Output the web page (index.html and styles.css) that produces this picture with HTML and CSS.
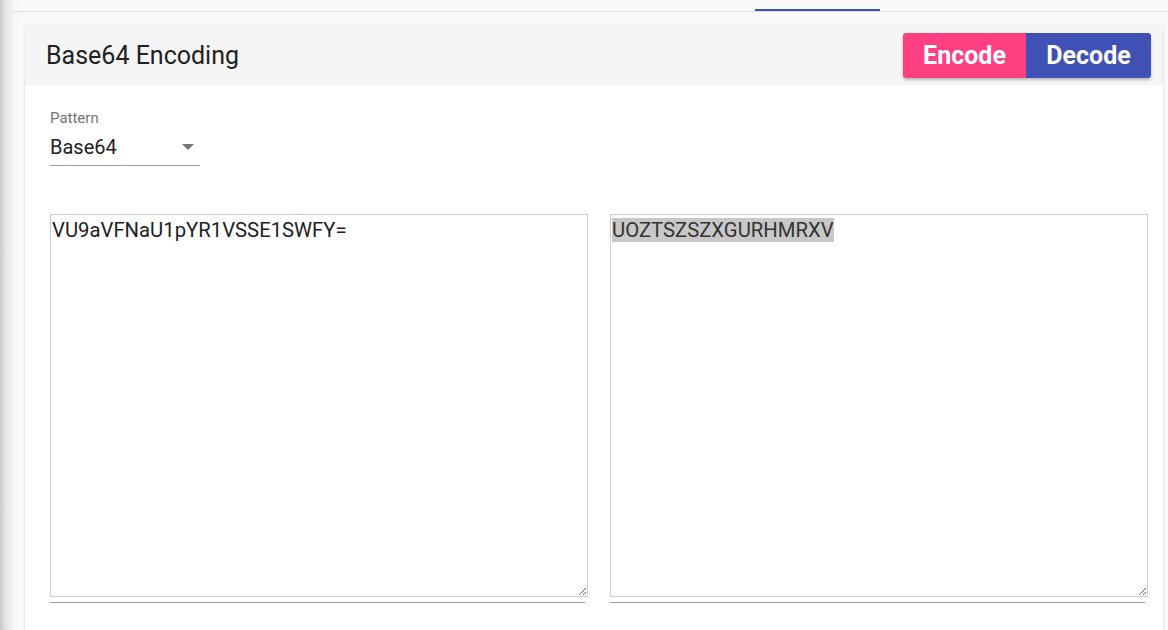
FILE: index.html
```html
<!DOCTYPE html>
<html>
<head>
    <title>Base64 Encoding</title>
    <link rel="stylesheet" href="styles.css">
</head>
<body>
    <div id="main">
        <div id="tab-bar">
            <div class="tab-ink"></div>
        </div>
        <div id="card">
            <div class="card-header">
                <h2>Base64 Encoding</h2>
                <div class="btn-group">
                    <button type="button" class="btn btn-encode">Encode</button>
                    <button type="button" class="btn btn-decode">Decode</button>
                </div>
            </div>
            <div class="card-body">
                <div class="field">
                    <label>Pattern</label>
                    <div class="select">
                        <span>Base64</span>
                        <span class="caret"></span>
                    </div>
                </div>
                <div class="io-row">
                    <div class="io-box">
                        <textarea id="input">VU9aVFNaU1pYR1VSSE1SWFY=</textarea>
                        <div class="underline"></div>
                    </div>
                    <div class="io-box">
                        <div class="output"><span class="selected">UOZTSZSZXGURHMRXV</span></div>
                        <div class="underline"></div>
                    </div>
                </div>
            </div>
        </div>
    </div>
</body>
</html>
```

FILE: styles.css
```css
body {
    font-family: Roboto, "Noto Sans", Arial, sans-serif;
    background: linear-gradient(to right, #c9c9c9 0, #e6e6e6 6px, #f5f5f5 14px, #fafafa 20px);
    margin: 0;
    padding: 0;
    height: 630px;
    overflow: hidden;
}

#main {
    margin-left: 13px;
}

#tab-bar {
    height: 11px;
    border-bottom: 1px solid #dcdcdc;
    display: flex;
    align-items: flex-end;
}

.tab-ink {
    margin-left: 742px;
    width: 125px;
    height: 2px;
    background-color: #3f51b5;
}

#card {
    margin: 13px 5px 0 12px;
    background-color: #fff;
    box-shadow: 0 1px 3px rgba(0, 0, 0, 0.15);
    height: 620px;
}

.card-header {
    height: 60px;
    background-color: #f5f5f5;
    display: flex;
    align-items: center;
    justify-content: space-between;
    padding: 0 12px 0 21px;
}

.card-header h2 {
    margin: 0;
    font-size: 25px;
    font-weight: 400;
    color: #212121;
}

.btn-group {
    display: flex;
    border-radius: 3px;
    overflow: hidden;
    box-shadow: 0 2px 3px rgba(0, 0, 0, 0.25);
}

.btn {
    height: 45px;
    border: none;
    color: #fff;
    font-family: Roboto, Arial, sans-serif;
    font-size: 25px;
    font-weight: 700;
    padding: 0;
    cursor: pointer;
}

.btn-encode {
    background-color: #ff4081;
    width: 123px;
}

.btn-decode {
    background-color: #3f51b5;
    width: 125px;
}

.card-body {
    padding: 25px 0 0 25px;
}

.field label {
    display: block;
    font-size: 15px;
    color: #757575;
    line-height: 16px;
}

.select {
    width: 150px;
    height: 36px;
    border-bottom: 1px solid #9e9e9e;
    display: flex;
    align-items: center;
    justify-content: space-between;
    font-size: 20px;
    color: #212121;
    margin-top: 3px;
}

.caret {
    width: 0;
    height: 0;
    border-left: 6px solid transparent;
    border-right: 6px solid transparent;
    border-top: 6px solid #757575;
    margin-right: 6px;
}

.io-row {
    display: flex;
    gap: 22px;
    margin-top: 48px;
}

.io-box {
    width: 538px;
}

#input, .output {
    box-sizing: border-box;
    width: 538px;
    height: 383px;
    border: 1px solid #cfcfcf;
    margin: 0;
    padding: 2px 1px;
    font-family: Roboto, Arial, sans-serif;
    font-size: 20.3px;
    line-height: 26px;
    color: #212121;
    resize: both;
    outline: none;
    display: block;
}

.output {
    overflow: auto;
    color: #333;
}

.selected {
    background-color: #c8c8c8;
}

.underline {
    width: 535px;
    height: 1px;
    background-color: #9e9e9e;
    margin-top: 5px;
}
```
